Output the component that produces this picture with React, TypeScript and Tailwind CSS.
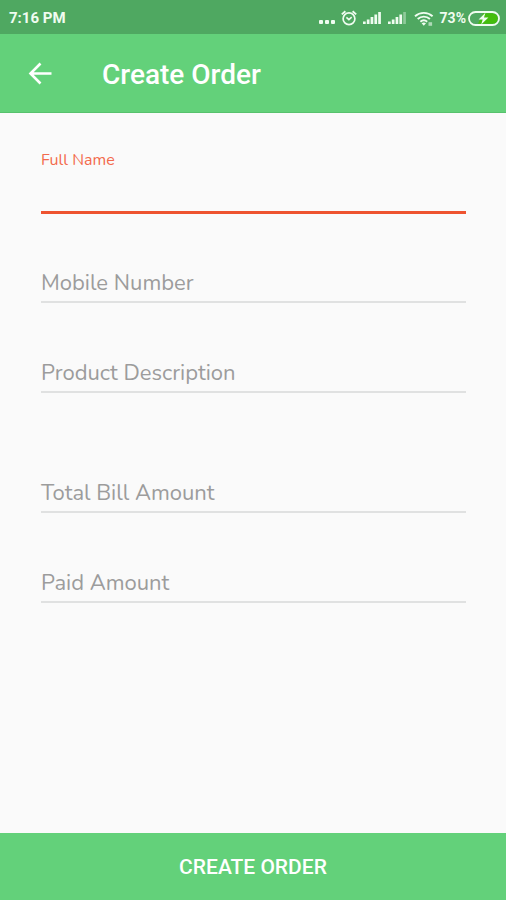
import { useState } from "react";

interface Field {
  id: string;
  label: string;
  type: string;
  spaced?: boolean;
}

const FIELDS: Field[] = [
  { id: "fullName", label: "Full Name", type: "text" },
  { id: "mobile", label: "Mobile Number", type: "tel" },
  { id: "description", label: "Product Description", type: "text" },
  { id: "total", label: "Total Bill Amount", type: "text", spaced: true },
  { id: "paid", label: "Paid Amount", type: "text" },
];

function AlarmIcon() {
  return (
    <svg viewBox="0 0 16 16" className="h-4 w-4" fill="none" stroke="currentColor" aria-hidden>
      <circle cx="8" cy="8.8" r="5.9" strokeWidth="1.7" />
      <path d="M.8 4.4 4.4 1.200M15.200 4.400l-3.600-3.200" strokeWidth="1.9" />
      <path d="m5.4 7.400 2.500 2.200 2.800-2.400" strokeWidth="1.6" />
    </svg>
  );
}

function SignalIcon({ weak = false }: { weak?: boolean }) {
  return (
    <svg viewBox="0 0 18 14" className="h-3.5 w-[18px]" fill="currentColor" aria-hidden>
      <path d="M0 10.500h2.700V13H0zM3.800 8.500h2.700V13H3.800zM7.600 6h2.700v7H7.600zM11.400 3.500h2.700V13h-2.700z" />
      <path d="M15.200 1h2.700v12h-2.700z" opacity={weak ? 0.4 : 1} />
    </svg>
  );
}

function WifiIcon() {
  return (
    <svg viewBox="0 0 20 15" className="h-[15px] w-5" fill="none" stroke="currentColor" aria-hidden>
      <g strokeWidth="1.9">
        <path d="M1 5.200c5-4.500 12.600-4.500 17.600 0" />
        <path d="M3.700 8c3.500-3.200 8.700-3.200 12.200 0" />
        <path d="M6.400 10.700c2-1.800 4.800-1.800 6.800 0" />
      </g>
      <path d="m7.600 12.200 2.200 2.600 2.200-2.600c-1.300-1-3.100-1-4.400 0Z" fill="currentColor" stroke="none" />
      <path d="M14.500 11.200h3.600v3.600h-3.600z" fill="currentColor" stroke="none" opacity="0.6" />
    </svg>
  );
}

function BatteryIcon() {
  return (
    <svg viewBox="0 0 32 15" className="h-[15px] w-8" aria-hidden>
      <path d="M15 2.200h9.500a5.300 5.300 0 0 1 0 10.600H10Z" fill="#43bd0c" />
      <rect x="1" y="1" width="30" height="13" rx="6.5" fill="none" stroke="currentColor" strokeWidth="1.8" />
      <path d="M17.400 1.800 10.600 8.400h4.100l-1.500 5 7.200-7h-4.400Z" fill="currentColor" />
    </svg>
  );
}

function StatusBar() {
  return (
    <div className="flex h-[34px] items-center justify-between bg-[#4fa861] pt-0.5 pr-1.5 pl-[9px] text-[15px] font-bold text-[#effcf0]">
      <span>7:16 PM</span>
      <div className="flex items-center">
        <svg viewBox="0 0 16 14" className="mr-1.5 h-3.5 w-4" fill="currentColor" aria-hidden>
          <rect x="0" y="9" width="4" height="4" rx="1" />
          <rect x="6" y="9" width="4" height="4" rx="1" />
          <rect x="12" y="9" width="4" height="4" rx="1" />
        </svg>
        <AlarmIcon />
        <div className="ml-1.5 flex gap-[7px]">
          <SignalIcon />
          <SignalIcon weak />
        </div>
        <div className="mr-1.5 ml-2">
          <WifiIcon />
        </div>
        <span className="mr-0.5 text-sm">73%</span>
        <BatteryIcon />
      </div>
    </div>
  );
}

export default function App() {
  const [active, setActive] = useState("fullName");
  const [values, setValues] = useState<Record<string, string>>({});

  return (
    <div className="flex min-h-screen flex-col bg-[#fafafa] font-['Roboto',sans-serif]">
      <StatusBar />
      <header className="flex h-[79px] items-center border-b border-[#57c26d] bg-[#63d17a] px-7 text-white">
        <button type="button" aria-label="Back" className="mr-[50px]">
          <svg viewBox="0 0 24 24" className="h-6 w-6" fill="none" stroke="currentColor" strokeWidth="2.6" aria-hidden>
            <path d="M12.500 2.500 2.500 12.500l10 10M3 12.500h20.500" />
          </svg>
        </button>
        <h1 className="pt-1 text-[28px] leading-8 font-medium">Create Order</h1>
      </header>

      <form id="order" className="flex-1 pt-[11px] pr-10 pl-[41px]" onSubmit={(e) => e.preventDefault()}>
        {FIELDS.map(({ id, label, type, spaced }) => {
          const isActive = active === id;
          const floats = isActive || Boolean(values[id]);
          return (
            <div key={id} className={`grid grid-rows-[24px_26px_40px] ${spaced ? "mt-[30px]" : ""}`}>
              <label
                htmlFor={id}
                className={`col-start-1 font-['Nunito','Noto_Sans',sans-serif] ${
                  floats ? "row-start-2 text-base leading-6" : "row-start-3 text-[22px] leading-[38px]"
                } ${isActive ? "text-[#f36a4c]" : "text-[#9c9c9c]"}`}
              >
                {label}
              </label>
              <input
                id={id}
                type={type}
                value={values[id] ?? ""}
                onFocus={() => setActive(id)}
                onChange={(e) => setValues({ ...values, [id]: e.target.value })}
                className={`col-start-1 row-start-3 w-full bg-transparent text-[22px] text-[#333333] outline-none ${
                  isActive ? "border-b-3 border-[#ee5330]" : "mb-px border-b-2 border-[#e0e1e1]"
                }`}
              />
            </div>
          );
        })}
      </form>

      <button type="submit" form="order" className="h-[67px] w-full bg-[#63d17a] pt-0.5 text-[21px] font-medium text-white">
        CREATE ORDER
      </button>
    </div>
  );
}
